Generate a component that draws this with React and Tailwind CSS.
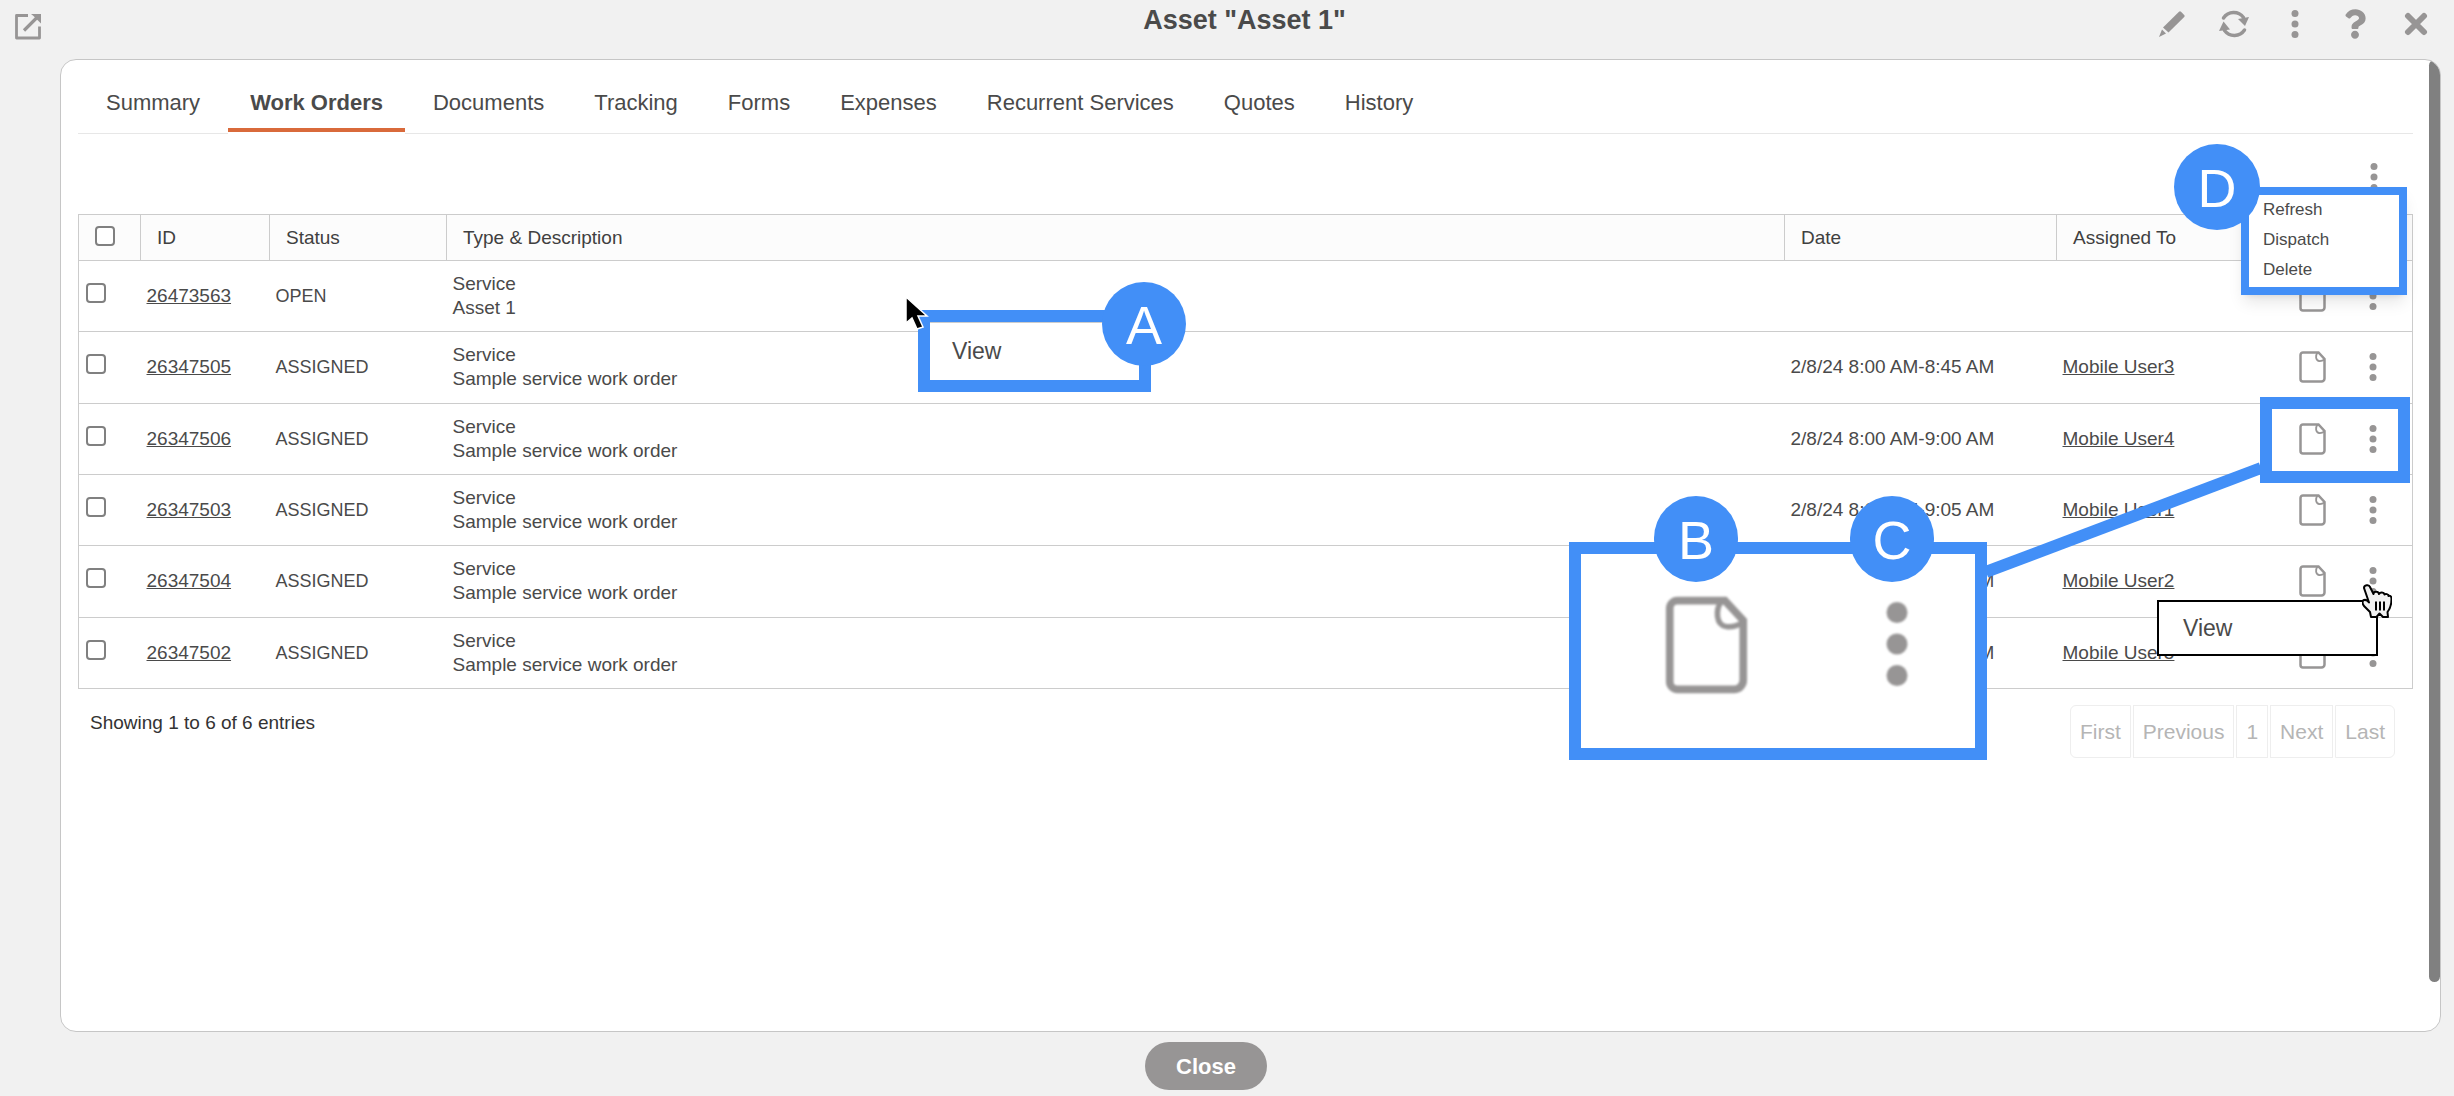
import { FaQuestion } from "react-icons/fa";

const tabs = [
  "Summary",
  "Work Orders",
  "Documents",
  "Tracking",
  "Forms",
  "Expenses",
  "Recurrent Services",
  "Quotes",
  "History",
];

const orders = [
  { id: "26473563", status: "OPEN", description: "Asset 1", date: "", user: "" },
  { id: "26347505", status: "ASSIGNED", description: "Sample service work order", date: "2/8/24 8:00 AM-8:45 AM", user: "Mobile User3" },
  { id: "26347506", status: "ASSIGNED", description: "Sample service work order", date: "2/8/24 8:00 AM-9:00 AM", user: "Mobile User4" },
  { id: "26347503", status: "ASSIGNED", description: "Sample service work order", date: "2/8/24 8:00 AM-9:05 AM", user: "Mobile User1" },
  { id: "26347504", status: "ASSIGNED", description: "Sample service work order", date: "2/8/24 8:00 AM-9:10 AM", user: "Mobile User2" },
  { id: "26347502", status: "ASSIGNED", description: "Sample service work order", date: "2/8/24 8:00 AM-9:15 AM", user: "Mobile User5" },
];

const pages = ["First", "Previous", "1", "Next", "Last"];

const Dots = ({ className = "h-7 w-2" }) => (
  <svg viewBox="0 0 8 28" className={className} fill="currentColor">
    <circle cx="4" cy="3.5" r="3.5" />
    <circle cx="4" cy="14" r="3.5" />
    <circle cx="4" cy="24.5" r="3.5" />
  </svg>
);

const DocIcon = ({ className = "h-8 w-[27px]" }) => (
  <svg viewBox="0 0 27 32" className={className} fill="none" stroke="currentColor" strokeWidth="2.5">
    <path d="M4 1.5h15.500l6 6.500v19.500a3 3 0 0 1-3 3H4A2.500 2.500 0 0 1 1.500 28V4A2.500 2.500 0 0 1 4 1.500z" />
    <path d="M18.500 1.500c-2.200 3-2 8 1.500 8.500 2.200.3 4-.5 5.500-1.500" strokeWidth="1.800" />
  </svg>
);

const OpenIcon = () => (
  <svg viewBox="0 0 28 28" className="h-7 w-7" fill="none" stroke="currentColor" strokeWidth="2.800" strokeLinejoin="round">
    <path d="M14 3.500H2.500V26h23V14.500" />
    <path d="M10 18.500 24 4.500" strokeWidth="3.200" />
    <path d="M17 2h10v9.500l-3-3-4.500-4.500z" fill="currentColor" stroke="none" />
  </svg>
);

const PencilIcon = () => (
  <svg viewBox="0 0 26 26" className="h-[26px] w-[26px]" fill="currentColor">
    <path d="M20 .800a1.500 1.500 0 0 1 2 0l3.200 3.200a1.500 1.500 0 0 1 0 2L9.500 21.500 4 16.500z" />
    <path d="M3 18.500 7 22.500 0 26z" />
  </svg>
);

const RefreshIcon = () => (
  <svg viewBox="0 0 30 30" className="h-[30px] w-[30px]">
    <g fill="none" stroke="currentColor" strokeWidth="3.500" strokeLinecap="round">
      <path d="M4.500 9A12.300 12.300 0 0 1 24.500 8.500" />
      <path d="M25.500 21A12.300 12.300 0 0 1 5.500 21.500" />
    </g>
    <path d="m19 10 11-2-4 9z" fill="currentColor" />
    <path d="M11 20.500 0 22l4.500-9.500z" fill="currentColor" />
  </svg>
);

const Marker = ({ letter, className }) => (
  <div className={`absolute flex items-center justify-center rounded-full bg-[#428ff7] pt-0.5 text-[54px] leading-none text-white ${className}`}>
    {letter}
  </div>
);

const Header = () => (
  <header className="flex h-[59px] items-start text-[#979595]">
    <button aria-label="Open in new window" className="mt-3 ml-3.5">
      <OpenIcon />
    </button>
    <h1 className="flex-1 pt-1 pl-[288px] text-center text-[27px] leading-8 font-bold text-[#4a4a4a]">
      Asset "Asset 1"
    </h1>
    <div className="mr-[26px] flex h-[47px] items-center">
      <button aria-label="Edit" className="mr-[34px]"><PencilIcon /></button>
      <button aria-label="Refresh" className="mr-[42px]"><RefreshIcon /></button>
      <button aria-label="More"><Dots /></button>
      <button aria-label="Help" className="mr-[38px] ml-[45px]"><FaQuestion className="h-[30px] w-[22px]" /></button>
      <button aria-label="Close window">
        <svg viewBox="0 0 24 24" className="h-6 w-6" stroke="currentColor" strokeWidth="6" strokeLinecap="round">
          <path d="m4 4 16 16M20 4 4 20" />
        </svg>
      </button>
    </div>
  </header>
);

const Tabs = () => (
  <nav className="flex gap-1.5 border-b border-[#e7e7e7] pt-[29px] pl-1.5 text-[22px] leading-7">
    {tabs.map((tab) => (
      <a
        key={tab}
        href="#"
        className={
          tab === "Work Orders"
            ? "-mb-px bg-white pb-0.5 font-bold"
            : "pb-4"
        }
      >
        <span className={tab === "Work Orders" ? "block border-b-4 border-[#d96a3b] px-[22px] pb-[11px]" : "block px-[22px]"}>
          {tab}
        </span>
      </a>
    ))}
  </nav>
);

const box = "block appearance-none rounded-[4px] border-2 border-[#808080] bg-white";
const th = "border border-[#ccc] px-4 text-left font-normal";

const WorkOrders = () => (
  <table className="h-[475px] w-full table-fixed border-collapse border border-[#ccc] text-[19px] leading-6">
    <colgroup>
      <col className="w-[62px]" />
      <col className="w-[129px]" />
      <col className="w-[177px]" />
      <col />
      <col className="w-[272px]" />
      <col className="w-[220px]" />
      <col className="w-[136px]" />
    </colgroup>
    <thead className="bg-[#fcfcfc] text-[#404040]">
      <tr className="h-[46px]">
        <th className={`${th} pb-1`}>
          <input type="checkbox" aria-label="Select all" className={`${box} h-5 w-5`} />
        </th>
        <th className={th}>ID</th>
        <th className={th}>Status</th>
        <th className={th}>Type &amp; Description</th>
        <th className={th}>Date</th>
        <th className={th}>Assigned To</th>
        <th className="border-b border-[#ccc]"></th>
      </tr>
    </thead>
    <tbody>
      {orders.map((order) => (
        <tr key={order.id} className="border-b border-[#ccc]">
          <td className="pb-1.5 pl-[7px]">
            <input type="checkbox" aria-label={`Select ${order.id}`} className={`${box} h-5 w-5`} />
          </td>
          <td className="px-1.5"><a href="#" className="underline">{order.id}</a></td>
          <td className="px-1.5 text-[18px]">{order.status}</td>
          <td className="px-1.5">
            Service
            <br />
            {order.description}
          </td>
          <td className="px-1.5">{order.date}</td>
          <td className="px-1.5"><a href="#" className="underline">{order.user}</a></td>
          <td>
            <div className="flex items-center justify-end gap-[43px] pr-[35px] text-[#979595]">
              <button aria-label="Open document"><DocIcon /></button>
              <button aria-label="Row menu"><Dots /></button>
            </div>
          </td>
        </tr>
      ))}
    </tbody>
  </table>
);

const TableFooter = () => (
  <div className="flex items-start justify-between pt-4 pr-[18px] pl-3">
    <p className="pt-1.5 text-[19px] leading-6 text-[#333]">Showing 1 to 6 of 6 entries</p>
    <div className="flex gap-0.5 text-[21px] text-[#b5b5b5]">
      {pages.map((page) => (
        <button key={page} className="h-[53px] border border-[#eee] px-[9px] first:rounded-l-md last:rounded-r-md">
          {page}
        </button>
      ))}
    </div>
  </div>
);

const Callouts = () => (
  <>
    {/* A: row context menu */}
    <div className="absolute top-[310px] left-[918px] h-[82px] w-[233px] border-12 border-[#428ff7] bg-white">
      <button className="block w-full border-t border-[#ccc] px-[22px] pt-3.5 text-left text-[23px] leading-7">View</button>
    </div>
    <Marker letter="A" className="top-[282px] left-[1102px] h-[84px] w-[84px]" />
    <svg viewBox="0 0 24 34" className="absolute top-[296px] left-[905px] h-[34px] w-6">
      <path d="M1 1v26l6-5 5 11 6-2-5-11h9z" fill="#000" stroke="#fff" strokeWidth="1.500" />
    </svg>

    {/* B and C: enlarged row actions */}
    <svg viewBox="0 0 280 120" className="absolute top-[460px] right-[190px] h-[120px] w-[280px]">
      <path d="M2 112 277 8" stroke="#428ff7" strokeWidth="12" />
    </svg>
    <div className="absolute top-[397px] right-[44px] h-[86px] w-[150px] border-12 border-[#428ff7]" />
    <div className="absolute top-[542px] right-[467px] flex h-[218px] w-[418px] items-start justify-between border-12 border-[#428ff7] bg-white pt-[42px] pr-[66px] pl-[84px] text-[#979595]">
      <DocIcon className="h-[98px] w-[83px] blur-[1px]" />
      <Dots className="mt-1 h-[88px] w-6 blur-[1px]" />
    </div>
    <Marker letter="B" className="top-[496px] right-[716px] h-[86px] w-[84px]" />
    <Marker letter="C" className="top-[496px] right-[520px] h-[86px] w-[84px]" />

    {/* D: table menu */}
    <div className="absolute top-[187px] right-[47px] flex h-[108px] w-[166px] flex-col items-start border-8 border-[#428ff7] bg-white pl-[14px] text-[17px] leading-[30px] shadow-lg">
      <button>Refresh</button>
      <button>Dispatch</button>
      <button>Delete</button>
    </div>
    <Marker letter="D" className="top-[144px] right-[194px] h-[86px] w-[86px]" />

    {/* open row menu under the pointer */}
    <div className="absolute top-[600px] right-[76px] h-[56px] w-[221px] border-2 border-black bg-white">
      <button className="block w-full px-6 pt-3 text-left text-[23px] leading-7">View</button>
    </div>
    <svg viewBox="0 0 30 34" className="absolute top-[584px] right-[62px] h-[34px] w-[30px]">
      <path
        d="M2 4c0-3 5-4 6-1l3.500 7c0-3 5-3 5.500 0 1-2 5-2 5.500.5 1-1 4-.5 4 1.500 2-.5 3 .5 3 3 0 6-1 9-4 13l.5 5h-5l-3.500-3.500-3 3.500H9l-1-5-6-6c-2-3-2-5 0-6 2-.5 4 1 5 2.500z"
        fill="#f1f1f1" stroke="#000" strokeWidth="2" strokeLinejoin="round"
      />
      <path d="M14 17.500v9M18 17.500v9M22 17.500v9" stroke="#000" strokeWidth="2" />
    </svg>
  </>
);

export default function App() {
  return (
    <div className="relative flex min-h-screen flex-col bg-[#f1f1f1] font-['Liberation_Sans',sans-serif] text-[#4a4a4a]">
      <Header />
      <main className="relative mr-[13px] ml-[60px] flex-1 overflow-hidden rounded-2xl border border-[#c6c6c6] bg-white pr-[27px] pl-[17px]">
        <Tabs />
        <div className="flex h-20 items-center justify-end pt-1.5 pr-[35px] text-[#979595]">
          <button aria-label="Table menu"><Dots /></button>
        </div>
        <WorkOrders />
        <TableFooter />
        <div className="absolute top-0 right-0 h-[95%] w-[11px] rounded-full bg-[#808080]" />
      </main>
      <footer className="flex h-16 items-center justify-center pt-1 pr-[42px]">
        <button className="h-12 rounded-full bg-[#979595] px-[31px] text-[22px] font-bold text-white">Close</button>
      </footer>
      <Callouts />
    </div>
  );
}
